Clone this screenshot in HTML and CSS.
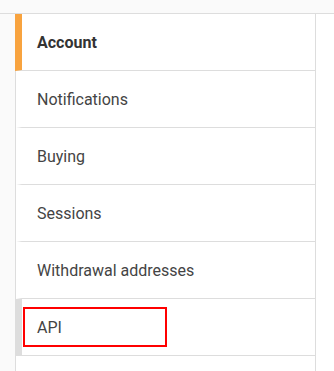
FILE: index.html
```html
<!DOCTYPE html>
<html>
<head>
    <title>Settings</title>
    <meta name="viewport" content="width=device-width" />
    <link rel="stylesheet" href="styles.css">
</head>
<body>

<div class="top-band"></div>

<div class="page">
    <div class="gutter"></div>
    <ul class="settings-menu">
        <li class="menu-item active">Account</li>
        <li class="menu-item">Notifications</li>
        <li class="menu-item">Buying</li>
        <li class="menu-item">Sessions</li>
        <li class="menu-item">Withdrawal addresses</li>
        <li class="menu-item hover">
            API
            <span class="highlight"></span>
        </li>
        <li class="menu-item"></li>
    </ul>
</div>

</body>
</html>
```

FILE: styles.css
```css
body, html {
    margin: 0;
    padding: 0;
    background: #fff;
    font-family: Roboto, "Liberation Sans", sans-serif;
    font-size: 16px;
    color: #444;
}

.top-band {
    height: 13px;
    background: #fafafa;
    border-bottom: 1px solid #dddddd;
}

.page {
    display: flex;
    height: 357px;
    overflow: hidden;
}

.gutter {
    width: 15px;
    background: #fafafa;
}

.settings-menu {
    list-style: none;
    margin: 0;
    padding: 0;
    width: 299px;
    border-left: 1px solid #dddddd;
    border-right: 1px solid #dddddd;
}

.menu-item {
    position: relative;
    display: flex;
    align-items: center;
    height: 56px;
    padding-left: 15px;
    border-left: 6px solid transparent;
    border-bottom: 1px solid #dddddd;
}

.menu-item.active {
    margin-left: -1px;
    border-left: 7px solid #f8a33f;
    font-weight: bold;
    color: #333;
}

.menu-item.hover {
    border-left-color: #dddddd;
}

.highlight {
    position: absolute;
    left: 1px;
    top: 8px;
    width: 140px;
    height: 36px;
    border: 2px solid #ff0000;
}
```
